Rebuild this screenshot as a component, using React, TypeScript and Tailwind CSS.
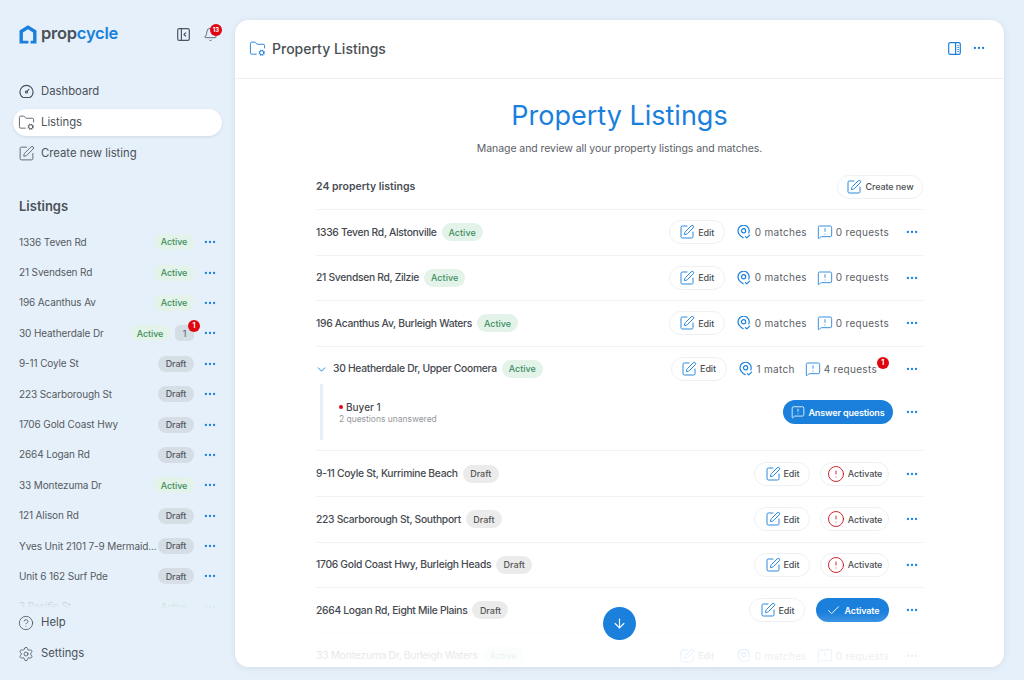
import {
  ArrowDown,
  Bell,
  Check,
  ChevronDown,
  CircleAlert,
  CircleHelp,
  Ellipsis,
  FolderCog,
  MessageSquareWarning,
  Settings,
  SquarePen,
} from "lucide-react";

type Status = "Active" | "Draft";

const sideListings: { name: string; status: Status; count?: number }[] = [
  { name: "1336 Teven Rd", status: "Active" },
  { name: "21 Svendsen Rd", status: "Active" },
  { name: "196 Acanthus Av", status: "Active" },
  { name: "30 Heatherdale Dr", status: "Active", count: 1 },
  { name: "9-11 Coyle St", status: "Draft" },
  { name: "223 Scarborough St", status: "Draft" },
  { name: "1706 Gold Coast Hwy", status: "Draft" },
  { name: "2664 Logan Rd", status: "Draft" },
  { name: "33 Montezuma Dr", status: "Active" },
  { name: "121 Alison Rd", status: "Draft" },
  { name: "Yves Unit 2101 7-9 Mermaid...", status: "Draft" },
  { name: "Unit 6 162 Surf Pde", status: "Draft" },
  { name: "3 Pacific St", status: "Active" },
];

function DashIcon() {
  return (
    <svg width="15" height="15" viewBox="0 0 16 16" fill="none" stroke="currentColor" strokeWidth="1.2">
      <path d="M4 14.2C2.2 13 1 10.9 1 8.5a7 7 0 0 1 14 0c0 2.4-1.2 4.5-3 5.7-.4.2-7.6.2-8 0Z" strokeLinejoin="round" />
      <circle cx="8" cy="8.5" r="1.1" />
      <path d="M8.8 7.7 10.6 5.6" strokeLinecap="round" />
    </svg>
  );
}

function PanelCollapse() {
  return (
    <svg width="13" height="13" viewBox="0 0 13 13" fill="none" stroke="#4b5563" strokeWidth="1.2">
      <rect x="0.7" y="0.7" width="11.6" height="11.6" rx="1.6" />
      <path d="M4.4 0.7v11.6" />
      <path d="M8.6 4.9 7 6.5l1.6 1.6" strokeLinecap="round" strokeLinejoin="round" />
    </svg>
  );
}

function PanelRules() {
  return (
    <svg width="13" height="13" viewBox="0 0 13 13" fill="none" stroke="#1a80dc" strokeWidth="1.2">
      <rect x="0.7" y="0.7" width="11.6" height="11.6" rx="1.6" />
      <path d="M7.6 0.7v11.6" />
      <path d="M9.3 3.5h1.5M9.3 5.5h1.5M9.3 7.5h1.5M9.3 9.5h1.5" />
    </svg>
  );
}

function PinCheck() {
  return (
    <svg width="14" height="14" viewBox="0 0 14 14" fill="none" stroke="#1a80dc" strokeWidth="1.2" className="shrink-0">
      <path d="M6.2 12.7C3.4 11 1 8.9 1 6a5.6 5.6 0 0 1 11.2-.4c0 .9-.1 1.6-.4 2.3" strokeLinecap="round" />
      <circle cx="6.6" cy="5.8" r="2.1" />
      <path d="m8.4 11.6 1.4 1.3 2.8-2.8" strokeLinecap="round" strokeLinejoin="round" />
    </svg>
  );
}

function Logo() {
  return (
    <div className="flex items-center gap-[4px]">
      <svg width="18" height="19" viewBox="0 0 18 19">
        <path
          d="M9 0.3 17.5 5.6V18.5H11.6V15.7H14.1V7.6L9 4.2 3.9 7.6V15.7H9.4V18.5H0.5V5.6Z"
          fill="#1a80dc"
        />
      </svg>
      <span className="pb-[1px] text-[16.5px] leading-none font-semibold tracking-[-0.25px]">
        <span className="text-[#4b5158]">prop</span>
        <span className="text-[#1a80dc]">cycle</span>
      </span>
    </div>
  );
}

function Dots({ className = "" }: { className?: string }) {
  return <Ellipsis size={14} strokeWidth={2} className={`shrink-0 text-[#1a80dc] ${className}`} />;
}

function SideBadge({ status }: { status: Status }) {
  return status === "Active" ? (
    <span className="flex h-4 w-10 shrink-0 items-center justify-center rounded-full bg-[#e3f3e9] text-[9px] font-medium text-[#3d8f62]">
      Active
    </span>
  ) : (
    <span className="flex h-4 w-9 shrink-0 items-center justify-center rounded-full bg-[#d5dde5] text-[9px] font-medium text-[#555c64]">
      Draft
    </span>
  );
}

function RowBadge({ status }: { status: Status }) {
  return status === "Active" ? (
    <span className="flex h-[18px] w-[41px] shrink-0 items-center justify-center rounded-full bg-[#e3f3e9] text-[9px] font-medium tracking-normal text-[#3d8f62]">
      Active
    </span>
  ) : (
    <span className="flex h-[18px] w-9 shrink-0 items-center justify-center rounded-full bg-[#ebebeb] text-[9px] font-medium tracking-normal text-[#555]">
      Draft
    </span>
  );
}

function PillButton({ icon, label, width }: { icon: React.ReactNode; label: string; width: string }) {
  return (
    <button
      type="button"
      className={`flex h-6 shrink-0 items-center justify-center gap-[3px] rounded-full border border-[#eef0f2] bg-white text-[9px] font-medium tracking-[-0.1px] text-[#4a4f55] ${width}`}
    >
      {icon}
      {label}
    </button>
  );
}

const editIcon = <SquarePen size={16} strokeWidth={1.4} className="text-[#1a80dc]" />;

function EditButton() {
  return <PillButton icon={editIcon} label="Edit" width="w-14" />;
}

function Stats({ matches, requests, alert }: { matches: string; requests: string; alert?: boolean }) {
  return (
    <div className="flex items-center gap-[11px] text-[10px] tracking-[0.3px] text-[#5c6167]">
      <span className="flex items-center gap-[4px]">
        <PinCheck />
        {matches}
      </span>
      <span className={`relative flex items-center gap-[3px] ${alert ? "mr-[12px]" : ""}`}>
        <MessageSquareWarning size={16} strokeWidth={1.3} className="-ml-[1px] text-[#1a80dc]" />
        {requests}
        {alert && (
          <span className="absolute -top-[4px] -right-[12px] flex h-3 w-3 items-center justify-center rounded-full bg-[#e0060f] text-[7px] font-bold text-white">
            1
          </span>
        )}
      </span>
    </div>
  );
}

function Row({ children, name, status, open }: { children: React.ReactNode; name: string; status: Status; open?: boolean }) {
  return (
    <div className="flex h-[45.6px] items-center justify-between border-t border-[#f0f1f3]">
      <div className="flex items-center gap-[5px] text-[10.3px] font-medium tracking-[-0.3px] text-[#45494f]">
        {open && <ChevronDown size={13} strokeWidth={1.8} className="-ml-[1px] text-[#1a80dc]" />}
        {name}
        <RowBadge status={status} />
      </div>
      <div className="flex items-center">{children}</div>
    </div>
  );
}

function ActivateOutline() {
  return (
    <PillButton
      icon={<CircleAlert size={18} strokeWidth={1.2} className="text-[#c8141c]" />}
      label="Activate"
      width="w-[69px]"
    />
  );
}

export default function App() {
  return (
    <div className="flex h-[680px] w-[1024px] overflow-hidden bg-[#e6f0fa] font-['Inter',sans-serif] text-[#4b5158]">
      <aside className="flex h-full w-[235px] shrink-0 flex-col pt-6 pb-[13px]">
        <div className="flex h-5 items-center justify-between pr-[17px] pl-[19px]">
          <Logo />
          <div className="flex items-center gap-[13px]">
            <PanelCollapse />
            <span className="relative">
              <Bell size={15} strokeWidth={1.3} className="text-[#4b5563]" />
              <span className="absolute -top-[3px] -right-[4px] flex h-3 w-3 items-center justify-center rounded-full bg-[#e0060f] text-[6px] font-bold text-white">
                13
              </span>
            </span>
          </div>
        </div>

        <nav className="mt-[34px] flex flex-col gap-[4px] px-[13px] text-[11.3px]">
          <a className="flex h-[27px] items-center gap-[7px] px-[6px]">
            <DashIcon />
            Dashboard
          </a>
          <a className="flex h-[27px] items-center gap-[6px] rounded-full bg-white pr-[6px] pl-[5px] shadow-[0_1px_3px_rgba(60,90,120,0.15)]">
            <FolderCog size={17} strokeWidth={1.2} />
            Listings
          </a>
          <a className="flex h-[27px] items-center gap-[6px] pr-[6px] pl-[5px]">
            <SquarePen size={17} strokeWidth={1.2} />
            Create new listing
          </a>
        </nav>

        <h2 className="mt-[29px] pl-[19px] text-[13px] leading-[20px] font-semibold">Listings</h2>

        <div className="relative mt-[11px] min-h-0 flex-1 overflow-hidden">
          <div className="flex flex-col pr-[18px] pl-[19px]">
            {sideListings.map((item) => (
              <div key={item.name} className="flex h-[30.4px] shrink-0 items-center text-[10px] tracking-[-0.12px] text-[#555a60]">
                <span className="min-w-0 flex-1 whitespace-nowrap">{item.name}</span>
                <span className="flex items-center gap-[5px]">
                  <SideBadge status={item.status} />
                  {item.count && (
                    <span className="relative flex h-4 w-[19px] items-center justify-center rounded-[5px] bg-[#d5dde5] text-[9px] text-[#555c64]">
                      {item.count}
                      <span className="absolute -top-[5px] -right-[6px] flex h-3 w-3 items-center justify-center rounded-full bg-[#e0060f] text-[7px] font-bold text-white">
                        1
                      </span>
                    </span>
                  )}
                </span>
                <Dots className="ml-[9px]" />
              </div>
            ))}
          </div>
          <div className="absolute right-0 bottom-0 left-0 h-[30px] bg-gradient-to-b from-[#e6f0fa00] to-[#e6f0fa]" />
        </div>

        <div className="flex flex-col gap-[4px] pl-[18px] text-[11.3px]">
          <a className="flex h-[27px] items-center gap-[7px]">
            <CircleHelp size={16} strokeWidth={1.2} />
            Help
          </a>
          <a className="flex h-[27px] items-center gap-[7px]">
            <Settings size={16} strokeWidth={1.2} />
            Settings
          </a>
        </div>
      </aside>

      <main className="relative mt-5 mb-[13px] flex w-[769px] flex-col overflow-hidden rounded-[14px] bg-white shadow-[0_1px_6px_rgba(60,90,120,0.12)]">
        <header className="flex h-[59px] shrink-0 items-center justify-between border-b border-[#eef0f2] pr-[18px] pb-[2px] pl-[14px]">
          <div className="flex items-center gap-[6px] text-[14px] font-medium text-[#4a4f55]">
            <FolderCog size={17} strokeWidth={1.3} className="text-[#1a80dc]" />
            Property Listings
          </div>
          <div className="flex items-center gap-[11px]">
            <PanelRules />
            <Dots />
          </div>
        </header>

        <div className="min-h-0 flex-1 overflow-hidden px-[81px]">
          <h1 className="mt-[19px] text-center text-[27px] leading-[36px] font-normal text-[#1a80dc]">
            Property Listings
          </h1>
          <p className="mt-[7px] text-center text-[10.5px] leading-[16px] tracking-[-0.07px] text-[#5c6167]">
            Manage and review all your property listings and matches.
          </p>

          <div className="mt-[8px] flex h-[44px] items-center justify-between">
            <span className="text-[10.5px] font-semibold text-[#4a4f55]">24 property listings</span>
            <PillButton icon={editIcon} label="Create new" width="w-[86px]" />
          </div>

          <Row name="1336 Teven Rd, Alstonville" status="Active">
            <EditButton />
            <span className="ml-[12px]">
              <Stats matches="0 matches" requests="0 requests" />
            </span>
            <Dots className="mr-[4px] ml-[16px]" />
          </Row>
          <Row name="21 Svendsen Rd, Zilzie" status="Active">
            <EditButton />
            <span className="ml-[12px]">
              <Stats matches="0 matches" requests="0 requests" />
            </span>
            <Dots className="mr-[4px] ml-[16px]" />
          </Row>
          <Row name="196 Acanthus Av, Burleigh Waters" status="Active">
            <EditButton />
            <span className="ml-[12px]">
              <Stats matches="0 matches" requests="0 requests" />
            </span>
            <Dots className="mr-[4px] ml-[16px]" />
          </Row>
          <Row name="30 Heatherdale Dr, Upper Coomera" status="Active" open>
            <EditButton />
            <span className="ml-[12px]">
              <Stats matches="1 match" requests="4 requests" alert />
            </span>
            <Dots className="mr-[4px] ml-[16px]" />
          </Row>

          <div className="-mt-[7px] flex h-[66px] items-start pl-[4px]">
            <div className="flex h-[56px] flex-1 items-center justify-between border-l-[3px] border-[#e6f0fa] pr-[4px] pl-[16px]">
              <div className="pt-[1px]">
                <div className="flex items-center gap-[3px] text-[10px] leading-[12px] font-medium text-[#45494f]">
                  <span className="h-1 w-1 rounded-full bg-[#e0060f]" />
                  Buyer 1
                </div>
                <div className="text-[8.5px] leading-[12px] tracking-[-0.03px] text-[#93979c]">2 questions unanswered</div>
              </div>
              <div className="flex items-center">
                <button
                  type="button"
                  className="flex h-6 w-[110px] items-center justify-center gap-[3px] rounded-full bg-[#1a80dc] text-[9px] font-semibold tracking-[-0.15px] text-white"
                >
                  <MessageSquareWarning size={14} strokeWidth={1.4} />
                  Answer questions
                </button>
                <Dots className="ml-[12px]" />
              </div>
            </div>
          </div>

          <Row name="9-11 Coyle St, Kurrimine Beach" status="Draft">
            <EditButton />
            <span className="ml-[10px]">
              <ActivateOutline />
            </span>
            <Dots className="mr-[4px] ml-[16px]" />
          </Row>
          <Row name="223 Scarborough St, Southport" status="Draft">
            <EditButton />
            <span className="ml-[10px]">
              <ActivateOutline />
            </span>
            <Dots className="mr-[4px] ml-[16px]" />
          </Row>
          <Row name="1706 Gold Coast Hwy, Burleigh Heads" status="Draft">
            <EditButton />
            <span className="ml-[10px]">
              <ActivateOutline />
            </span>
            <Dots className="mr-[4px] ml-[16px]" />
          </Row>
          <Row name="2664 Logan Rd, Eight Mile Plains" status="Draft">
            <EditButton />
            <button
              type="button"
              className="ml-[11px] flex h-6 w-[73px] items-center justify-center gap-[4px] rounded-full bg-gradient-to-b from-[#1a80dc] from-60% to-[#3c94e4] text-[9px] font-semibold tracking-[-0.15px] text-white"
            >
              <Check size={15} strokeWidth={1.5} />
              Activate
            </button>
            <Dots className="mr-[4px] ml-[16px]" />
          </Row>
          <Row name="33 Montezuma Dr, Burleigh Waters" status="Active">
            <EditButton />
            <span className="ml-[12px]">
              <Stats matches="0 matches" requests="0 requests" />
            </span>
            <Dots className="mr-[4px] ml-[16px]" />
          </Row>
        </div>

        <div className="pointer-events-none absolute right-0 bottom-0 left-0 h-[36px] bg-gradient-to-b from-[#ffffffc8] to-[#ffffffee]" />
        <button
          type="button"
          className="absolute bottom-[27px] left-[368px] flex h-[33px] w-[33px] items-center justify-center rounded-full bg-[#1a80dc] text-white"
        >
          <ArrowDown size={15} strokeWidth={1.8} />
        </button>
      </main>
    </div>
  );
}
